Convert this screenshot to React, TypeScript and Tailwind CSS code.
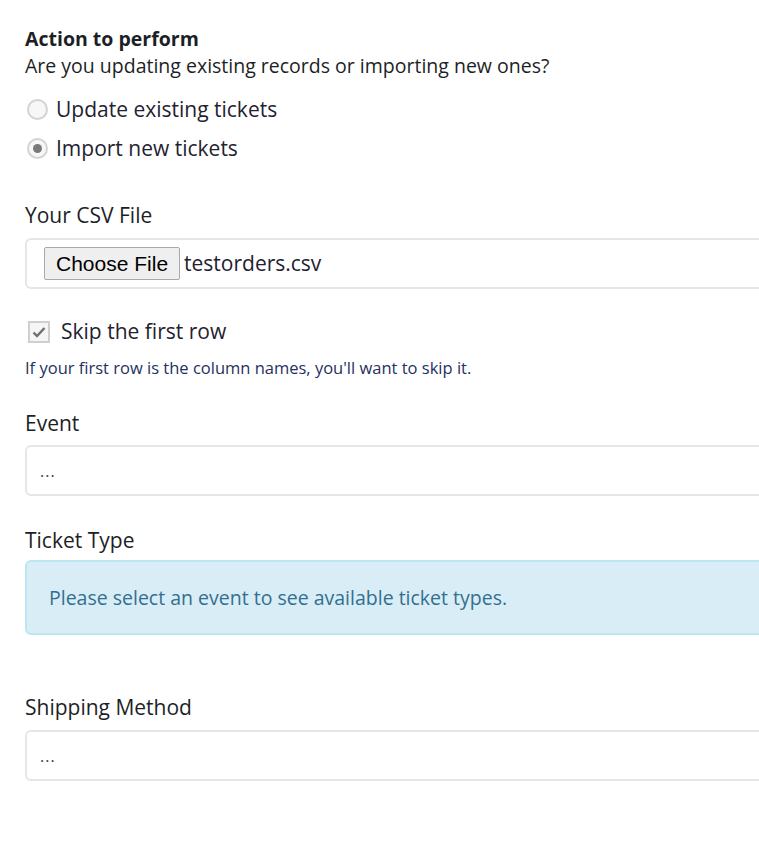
import React from "react";

const font = { fontFamily: '"Open Sans", "Noto Sans", sans-serif' };

function Radio({ checked, label }: { checked?: boolean; label: string }) {
  return (
    <div className="flex items-center h-[39px]">
      <span className="ml-[2px] w-[21px] h-[21px] rounded-full border-2 border-[#d4d4d4] bg-[#f7f7f7] flex items-center justify-center">
        {checked && <span className="w-[9px] h-[9px] rounded-full bg-[#7a7a7a]" />}
      </span>
      <span className="ml-[8px] text-[21px] text-[#1f2230]">{label}</span>
    </div>
  );
}

function Box({ children }: { children: React.ReactNode }) {
  return (
    <div className="w-[780px] h-[51px] border-2 border-[#e6e6e6] rounded-[6px] bg-white flex items-center pl-[17px]">
      {children}
    </div>
  );
}

export default function App() {
  return (
    <div className="w-full min-h-[859px] overflow-hidden bg-white" style={font}>
      <div className="pl-[25px] pt-[27px] text-[#1d1f26]">
        <div className="text-[19.5px] font-bold leading-[24px]">Action to perform</div>
        <div className="text-[19.5px] leading-[28px] mt-[1px]">Are you updating existing records or importing new ones?</div>
        <div className="mt-[10px]">
          <Radio label="Update existing tickets" />
          <Radio checked label="Import new tickets" />
        </div>

        <div className="mt-[34px] text-[21px] leading-[26px]">Your CSV File</div>
        <div className="mt-[10px]">
          <div className="w-[780px] h-[51px] border-2 border-[#e6e6e6] rounded-[6px] bg-white flex items-center pl-[17px]">
            <span
              className="h-[33px] px-[11px] border border-[#a9a9a9] rounded-[2px] bg-[#efefef] text-[21px] text-black flex items-center"
              style={{ fontFamily: '"Liberation Sans", Arial, sans-serif' }}
            >
              Choose File
            </span>
            <span className="ml-[4px] text-[21px] text-[#1f2230]">testorders.csv</span>
          </div>
        </div>

        <div className="mt-[30px] flex items-center h-[26px]">
          <span className="ml-[3px] w-[22px] h-[22px] border-2 border-[#cfcfcf] bg-[#f5f5f5] flex items-center justify-center">
            <svg width="14" height="12" viewBox="0 0 14 12">
              <path d="M1.5 6.5 L5 10 L12.5 2" stroke="#6f6f6f" strokeWidth="2.4" fill="none" />
            </svg>
          </span>
          <span className="ml-[11px] text-[21px] text-[#1f2230]">Skip the first row</span>
        </div>
        <div className="mt-[13px] text-[16.5px] leading-[20px] text-[#1f3160]">
          If your first row is the column names, you'll want to skip it.
        </div>

        <div className="mt-[32px] text-[21px] leading-[26px]">Event</div>
        <div className="mt-[9px]">
          <Box>
            <span className="text-[16px] text-[#3a3a4a] tracking-[1px] -ml-[4px]">...</span>
          </Box>
        </div>

        <div className="mt-[31px] text-[21px] leading-[26px]">Ticket Type</div>
        <div className="mt-[7px] w-[780px] h-[75px] border-2 border-[#bde6f0] rounded-[6px] bg-[#d9edf7] flex items-center pl-[22px]">
          <span className="text-[19.5px] text-[#336f8f]">Please select an event to see available ticket types.</span>
        </div>

        <div className="mt-[59px] text-[21px] leading-[26px]">Shipping Method</div>
        <div className="mt-[10px]">
          <Box>
            <span className="text-[16px] text-[#3a3a4a] tracking-[1px] -ml-[4px]">...</span>
          </Box>
        </div>
      </div>
    </div>
  );
}
